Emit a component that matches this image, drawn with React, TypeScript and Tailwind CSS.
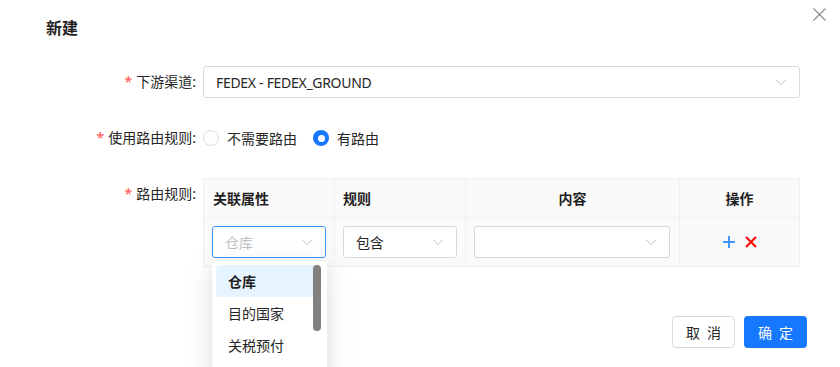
import React from 'react';

const Chevron: React.FC = () => (
    <svg width="12" height="12" viewBox="0 0 12 12" className="text-[#bfbfbf] shrink-0">
        <path d="M1.5 4 L6 8.5 L10.5 4" fill="none" stroke="currentColor" strokeWidth="1" />
    </svg>
);

const Select: React.FC<{ value?: string; placeholder?: string; focused?: boolean; className?: string }> = ({ value, placeholder, focused, className }) => (
    <div className={`h-[32px] flex items-center justify-between pl-[12px] pr-[12px] rounded-[3px] border bg-white ${focused ? 'border-[#4096ff]' : 'border-[#d9d9d9]'} ${className ?? ''}`}>
        {value ? <span className="text-[#262626] tracking-[-0.3px]">{value}</span> : <span className="text-[#bfbfbf]">{placeholder}</span>}
        <Chevron />
    </div>
);

const Label: React.FC<{ text: string }> = ({ text }) => (
    <div className="w-[196px] mr-[7px] shrink-0 text-right leading-[32px] text-[#262626]">
        <span className="text-[#ff4d4f] mr-[4px]">*</span>{text}:
    </div>
);

export default function App() {
    return (
        <div className="relative w-[840px] h-[367px] overflow-hidden bg-white text-[14px]" style={{ fontFamily: '"Noto Sans", "Noto Sans CJK SC", sans-serif' }}>
            {/* close */}
            <svg className="absolute left-[813px] top-[8px]" width="13" height="13" viewBox="0 0 13 13">
                <path d="M0.5 0.5 L12.5 12.5 M12.5 0.5 L0.5 12.5" stroke="#8c8c8c" strokeWidth="1.2" />
            </svg>

            <h2 className="pt-[16px] pl-[46px] text-[16px] leading-[24px] font-bold text-[#1f1f1f]">新建</h2>

            <div className="pr-[40px]">
                {/* 下游渠道 */}
                <div className="mt-[26px] flex items-start">
                    <Label text="下游渠道" />
                    <Select value="FEDEX - FEDEX_GROUND" className="flex-1" />
                </div>

                {/* 使用路由规则 */}
                <div className="mt-[24px] flex items-center">
                    <Label text="使用路由规则" />
                    <label className="flex items-center gap-[8px] mr-[16px]">
                        <span className="w-[16px] h-[16px] rounded-full border border-[#d9d9d9] bg-white" />
                        <span className="text-[#262626]">不需要路由</span>
                    </label>
                    <label className="flex items-center gap-[8px]">
                        <span className="w-[16px] h-[16px] rounded-full bg-[#1677ff] flex items-center justify-center">
                            <span className="w-[7px] h-[7px] rounded-full bg-white" />
                        </span>
                        <span className="text-[#262626]">有路由</span>
                    </label>
                </div>

                {/* 路由规则 */}
                <div className="mt-[24px] flex items-start">
                    <Label text="路由规则" />
                    <div className="flex-1 border border-[#f0f0f0] bg-[#fafafa]">
                        <div className="grid grid-cols-[131px_131px_214px_1fr] h-[39px] border-b border-[#f0f0f0] font-bold text-[#1f1f1f]">
                            <div className="flex items-center pl-[9px] border-r border-[#f0f0f0]">关联属性</div>
                            <div className="flex items-center pl-[8px] border-r border-[#f0f0f0]">规则</div>
                            <div className="flex items-center justify-center border-r border-[#f0f0f0]">内容</div>
                            <div className="flex items-center justify-center">操作</div>
                        </div>
                        <div className="grid grid-cols-[131px_131px_214px_1fr] h-[48px]">
                            <div className="relative flex items-center pl-[8px] border-r border-[#f0f0f0]">
                                <Select placeholder="仓库" focused className="w-[114px]" />
                                {/* dropdown */}
                                <div className="absolute left-[8px] top-[43px] w-[115px] h-[120px] bg-white rounded-[4px] p-[4px] shadow-[0_6px_16px_0_rgba(0,0,0,0.08),0_3px_6px_-4px_rgba(0,0,0,0.12),0_9px_28px_8px_rgba(0,0,0,0.05)] z-10">
                                    <div className="relative">
                                        <div className="h-[32px] flex items-center pl-[12px] rounded-[4px] bg-[#e6f4ff] font-bold text-[#1f1f1f] mr-[5px]">仓库</div>
                                        <div className="h-[32px] flex items-center pl-[12px] text-[#262626]">目的国家</div>
                                        <div className="h-[32px] flex items-center pl-[12px] text-[#262626]">关税预付</div>
                                        <div className="absolute right-[2px] top-0 w-[8px] h-[66px] rounded-full bg-[#808080]" />
                                    </div>
                                </div>
                            </div>
                            <div className="flex items-center pl-[8px] border-r border-[#f0f0f0]">
                                <Select value="包含" className="w-[114px]" />
                            </div>
                            <div className="flex items-center pl-[8px] border-r border-[#f0f0f0]">
                                <Select className="w-[196px]" />
                            </div>
                            <div className="flex items-center justify-center gap-[10px]">
                                <svg width="12" height="12" viewBox="0 0 12 12">
                                    <path d="M6 0 V12 M0 6 H12" stroke="#4096ff" strokeWidth="2" />
                                </svg>
                                <svg width="12" height="12" viewBox="0 0 12 12">
                                    <path d="M1 1 L11 11 M11 1 L1 11" stroke="#ff0000" strokeWidth="2" />
                                </svg>
                            </div>
                        </div>
                    </div>
                </div>
            </div>

            {/* footer */}
            <div className="mt-[49px] pr-[33px] flex justify-end gap-[9px]">
                <button className="w-[63px] h-[32px] rounded-[4px] border border-[#d9d9d9] bg-white text-[#262626] tracking-[7px] pl-[7px]">取消</button>
                <button className="w-[63px] h-[32px] rounded-[4px] bg-[#1677ff] text-white tracking-[7px] pl-[7px]">确定</button>
            </div>
        </div>
    );
}
